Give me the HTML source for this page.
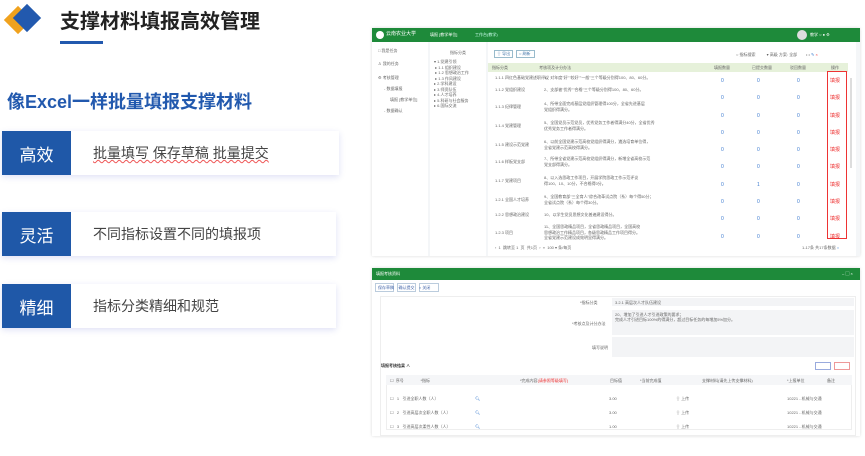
<!DOCTYPE html>
<html><head><meta charset="utf-8"><style>
*{margin:0;padding:0;box-sizing:border-box}
body{width:865px;height:456px;background:#fff;position:relative;overflow:hidden;font-family:"Liberation Sans","Noto Sans CJK SC",sans-serif}
.a{position:absolute}
.t{font-size:4px;color:#666;white-space:nowrap;line-height:5px}
.card{position:absolute;background:#fff;box-shadow:0 2px 6px rgba(80,90,200,.18)}
.lab{position:absolute;left:0;top:0;bottom:0;width:69px;background:#1f58a8;color:#fff;font-size:17px;display:flex;align-items:center;justify-content:center}
.txt{position:absolute;left:91px;top:0;bottom:0;display:flex;align-items:center;font-size:14px;color:#444}
.blue{color:#3d7bd0;font-size:5px}
.red{color:#e33;font-size:5px}
</style></head><body>
<!-- logo -->
<div class="a" style="left:8px;top:10px;width:20px;height:20px;background:#f0a21e;transform:rotate(45deg)"></div>
<div class="a" style="left:17px;top:8px;width:20px;height:20px;background:#2259ae;transform:rotate(45deg)"></div>
<div class="a" style="left:60px;top:5px;font-size:20px;font-weight:bold;color:#222">支撑材料填报高效管理</div>
<div class="a" style="left:60px;top:41px;width:43px;height:3px;background:#2259ae"></div>
<div class="a" style="left:7px;top:88px;font-size:18px;font-weight:bold;color:#2259ae">像Excel一样批量填报支撑材料</div>

<div class="card" style="left:2px;top:131px;width:337px;height:44px"><div class="lab">高效</div><div class="txt" style="text-decoration:underline wavy #e55;text-decoration-thickness:1px">批量填写 保存草稿 批量提交</div></div>
<div class="card" style="left:2px;top:212px;width:334px;height:44px"><div class="lab">灵活</div><div class="txt">不同指标设置不同的填报项</div></div>
<div class="card" style="left:2px;top:284px;width:334px;height:44px"><div class="lab">精细</div><div class="txt">指标分类精细和规范</div></div>

<!-- top screenshot -->
<div class="a" style="left:372px;top:28px;width:488px;height:228px;background:#f4f6f8;box-shadow:0 0 3px rgba(0,0,0,.15)">
 <div class="a" style="left:0;top:0;width:488px;height:14px;background:#1e8a3a"></div>
 <div class="a" style="left:4px;top:3px;width:8px;height:8px;border-radius:50%;background:#fff"></div>
 <div class="a t" style="left:14px;top:4px;color:#fff;font-size:5px">云南农业大学</div>
 <div class="a t" style="left:58px;top:4px;color:#fff">填报 [教学单位]</div>
 <div class="a t" style="left:103px;top:4px;color:#cfe">工作台(教学)</div>
 <div class="a" style="left:425px;top:2px;width:10px;height:10px;border-radius:50%;background:#ddd"></div>
 <div class="a t" style="left:438px;top:4px;color:#fff">教学 ○ ● ⚙</div>
 <div class="a" style="left:0;top:14px;width:56px;height:214px;background:#fff"></div>
 <div class="a t" style="left:6px;top:20px">□ 我是任务</div>
 <div class="a t" style="left:6px;top:33px">♙ 我的任务</div>
 <div class="a t" style="left:6px;top:47px">⚙ 考核管理</div>
 <div class="a t" style="left:12px;top:58px">- 数据填报</div>
 <div class="a t" style="left:18px;top:69px">填报 [教学单位]</div>
 <div class="a t" style="left:12px;top:80px">- 数据确认</div>
 <div class="a" style="left:58px;top:14px;width:56px;height:214px;background:#fff"></div>
 <div class="a t" style="left:78px;top:22px">指标分类</div>
 <div class="a t" style="left:62px;top:31px;line-height:5.5px">▾ 1.党建引领<br>&nbsp;▸ 1.1 组织建设<br>&nbsp;▸ 1.2 思想政治工作<br>&nbsp;▸ 1.3 作风建设<br>▸ 2.学科建设<br>▸ 3.师资队伍<br>▸ 4.人才培养<br>▸ 5.科研与社会服务<br>▸ 6.国际交流</div>
 <div class="a" style="left:116px;top:14px;width:368px;height:214px;background:#fff"></div>
 <div class="a" style="left:122px;top:22px;width:19px;height:8px;border:1px solid #9bc"></div>
 <div class="a" style="left:144px;top:22px;width:19px;height:8px;border:1px solid #9bc"></div>
 <div class="a t" style="left:125px;top:23px;color:#47a">⇧ 导出</div>
 <div class="a t" style="left:147px;top:23px;color:#47a">○ 刷新</div>
 <div class="a t" style="left:364px;top:24px">○ 指标搜索 &nbsp;&nbsp;&nbsp;&nbsp;&nbsp;&nbsp;&nbsp;&nbsp;&nbsp;▾ 高级 方案: 全部 &nbsp;&nbsp;&nbsp;&nbsp;&nbsp;&nbsp; • • <span style="color:#37c">✎</span> <span style="color:#e33">×</span></div>
 <div class="a" style="left:116px;top:35px;width:360px;height:9px;background:#e6f1da"></div>
 <div class="a t" style="left:120px;top:37px">指标分类 &nbsp;&nbsp;&nbsp;&nbsp;&nbsp;&nbsp;&nbsp;&nbsp;&nbsp;&nbsp;&nbsp;&nbsp;&nbsp;&nbsp;&nbsp;&nbsp;&nbsp;&nbsp;&nbsp;&nbsp;&nbsp;&nbsp;&nbsp;&nbsp;&nbsp;&nbsp;&nbsp;考核项及计分办法</div>
 <div class="a t" style="left:342px;top:37px">填报数量</div><div class="a t" style="left:380px;top:37px">已提交数量</div><div class="a t" style="left:418px;top:37px">驳回数量</div><div class="a t" style="left:459px;top:37px">操作</div>
 <div class="a" style="left:455px;top:43px;width:20px;height:168px;border:1px solid #e33"></div>
 <div class="a" style="left:478px;top:50px;width:2px;height:90px;background:#ddd"></div>
</div>
<div class="a" style="left:372px;top:0;width:488px;height:256px">
 <div class="a t" style="left:123px;top:75px">1.1.1 四红色基础党建述职评议</div><div class="a t" style="left:172px;top:75px">1、对年度"好""较好""一般"三个等级分别得100、80、60分。</div>
 <div class="a t" style="left:123px;top:87px">1.1.2 党组织建设</div><div class="a t" style="left:172px;top:87px">2、支部被"优秀""合格"三个等级分别得100、80、60分。</div>
 <div class="a t" style="left:123px;top:104px">1.1.3 纪律管理</div><div class="a t" style="left:172px;top:101px;line-height:6px">4、所带全面完成基层党组织管理得100分，全省先进基层<br>党组织得满分。</div>
 <div class="a t" style="left:123px;top:123px">1.1.4 党建管理</div><div class="a t" style="left:172px;top:120px;line-height:6px">5、全国党员示范党员，优秀党务工作者得满分40分，全省优秀<br>优秀党务工作者得满分。</div>
 <div class="a t" style="left:123px;top:142px">1.1.5 建设示范党建</div><div class="a t" style="left:172px;top:139px;line-height:6px">6、以前全国党建示范高校党组织得满分，遴选培育单位得，<br>全省党建示范高校得满分。</div>
 <div class="a t" style="left:123px;top:159px">1.1.6 样板党支部</div><div class="a t" style="left:172px;top:156px;line-height:6px">7、所带全省党建示范高校党组织得满分，新增全省高校示范<br>党支部得满分。</div>
 <div class="a t" style="left:123px;top:178px">1.1.7 党建项目</div><div class="a t" style="left:172px;top:175px;line-height:6px">8、以入选思政工作项目，开展学院思政工作示范评议<br>得100、10、10分，不合格得0分。</div>
 <div class="a t" style="left:123px;top:197px">1.2.1 全国人才培养</div><div class="a t" style="left:172px;top:194px;line-height:6px">9、全国教育部"三全育人"综合改革试点院（系）每个得50分；<br>全省试点院（系）每个得30分。</div>
 <div class="a t" style="left:123px;top:212px">1.2.2 思想政治建设</div><div class="a t" style="left:172px;top:212px">10、以学生党员思想文化普遍建设得分。</div>
 <div class="a t" style="left:123px;top:230px">1.2.3 项目</div><div class="a t" style="left:172px;top:224px;line-height:5.5px">11、全国思政精品项目，全省思政精品项目，全国高校<br>思想政治工作精品项目，各级思政精品工作项目得分。<br>全省党建示范建设成效明显得满分。</div>
 <div class="a t" style="left:123px;top:245px">‹ &nbsp;1 &nbsp;跳转至 1 &nbsp;页 &nbsp;共1页 &nbsp;› &nbsp;» &nbsp;100 ▾ 条/每页</div>
 <div class="a t" style="left:430px;top:245px">1-17条 共17条数据 <span style="color:#37c">○</span></div>
</div>
<div class="a blue" style="left:721px;top:73px;line-height:17.3px">0<br>0<br>0<br>0<br>0<br>0<br>0<br>0<br>0<br>0</div>
<div class="a blue" style="left:757px;top:73px;line-height:17.3px">0<br>0<br>0<br>0<br>0<br>0<br>1<br>0<br>0<br>0</div>
<div class="a blue" style="left:797px;top:73px;line-height:17.3px">0<br>0<br>0<br>0<br>0<br>0<br>0<br>0<br>0<br>0</div>
<div class="a red" style="left:830px;top:73px;line-height:17.3px">填报<br>填报<br>填报<br>填报<br>填报<br>填报<br>填报<br>填报<br>填报<br>填报</div>

<!-- bottom screenshot -->
<div class="a" style="left:372px;top:268px;width:488px;height:168px;background:#fff;box-shadow:0 0 3px rgba(0,0,0,.15)">
 <div class="a" style="left:0;top:0;width:488px;height:12px;background:#1e8a3a"></div>
 <div class="a t" style="left:4px;top:3px;color:#fff">填报考核资料</div>
 <div class="a t" style="left:470px;top:3px;color:#fff">– ▢ ×</div>
 <div class="a" style="left:3px;top:15px;width:19px;height:9px;border:1px solid #bcd"></div>
 <div class="a" style="left:25px;top:15px;width:19px;height:9px;border:1px solid #bcd"></div>
 <div class="a" style="left:47px;top:15px;width:20px;height:9px;border:1px solid #bcd"></div>
 <div class="a t" style="left:6px;top:17px;color:#46a">保存草稿 &nbsp;&nbsp;&nbsp;确认提交 &nbsp;&nbsp;&nbsp;× 关闭</div>
 <div class="a" style="left:8px;top:28px;width:476px;height:140px;border:1px solid #eee"></div>
 <div class="a t" style="left:208px;top:32px">*指标分类</div>
 <div class="a" style="left:240px;top:30px;width:242px;height:8px;background:#f3f4f6"></div>
 <div class="a t" style="left:243px;top:32px">3.2.1 高层次人才队伍建设</div>
 <div class="a t" style="left:200px;top:53px">*考核点及计分办法</div>
 <div class="a" style="left:240px;top:42px;width:242px;height:25px;background:#f3f4f6"></div>
 <div class="a t" style="left:243px;top:44px">20、增加了引进人才引进政策的要求；<br>完成人才引进目标100%的得满分，超过目标任务的每增加5%加分。</div>
 <div class="a t" style="left:220px;top:77px">填写说明</div>
 <div class="a" style="left:240px;top:69px;width:242px;height:20px;background:#f3f4f6"></div>
 <div class="a t" style="left:9px;top:95px;font-weight:bold;color:#333">填报考核结果 ∧</div>
 <div class="a" style="left:443px;top:94px;width:16px;height:8px;border:1px solid #9ad"></div>
 <div class="a" style="left:462px;top:94px;width:16px;height:8px;border:1px solid #e99"></div>
 <div class="a" style="left:14px;top:107px;width:466px;height:55px;border:1px solid #eee"></div>
 <div class="a" style="left:14px;top:107px;width:466px;height:10px;background:#f5f6f8"></div>
 <div class="a t" style="left:18px;top:110px">☐ &nbsp;序号 &nbsp;&nbsp;&nbsp;&nbsp;&nbsp;&nbsp;&nbsp;&nbsp;&nbsp;&nbsp;&nbsp;&nbsp;&nbsp;&nbsp;*指标</div>
 <div class="a t" style="left:148px;top:110px">*完成内容<span style="color:#e33">(请参照等级填写)</span></div>
 <div class="a t" style="left:238px;top:110px">目标值</div><div class="a t" style="left:268px;top:110px">*当前完成值</div>
 <div class="a t" style="left:330px;top:110px">支撑材料(请先上传支撑材料)</div>
 <div class="a t" style="left:415px;top:110px">*上报单位</div><div class="a t" style="left:455px;top:110px">备注</div>
 <div class="a t" style="left:18px;top:124px;line-height:14px">☐ &nbsp;&nbsp;1 &nbsp;&nbsp;引进全职人数（人）<br>☐ &nbsp;&nbsp;2 &nbsp;&nbsp;引进高层次全职人数（人）<br>☐ &nbsp;&nbsp;3 &nbsp;&nbsp;引进高层次柔性人数（人）</div>
 <div class="a t" style="left:103px;top:124px;line-height:14px;color:#37c">🔍︎<br>🔍︎<br>🔍︎</div>
 <div class="a t" style="left:237px;top:124px;line-height:14px">3.00<br>3.00<br>1.00</div>
 <div class="a t" style="left:304px;top:124px;line-height:14px">⇧ 上传<br>⇧ 上传<br>⇧ 上传</div>
 <div class="a t" style="left:415px;top:124px;line-height:14px">10221 - 机械与交通<br>10221 - 机械与交通<br>10221 - 机械与交通</div>
</div>
</body></html>
